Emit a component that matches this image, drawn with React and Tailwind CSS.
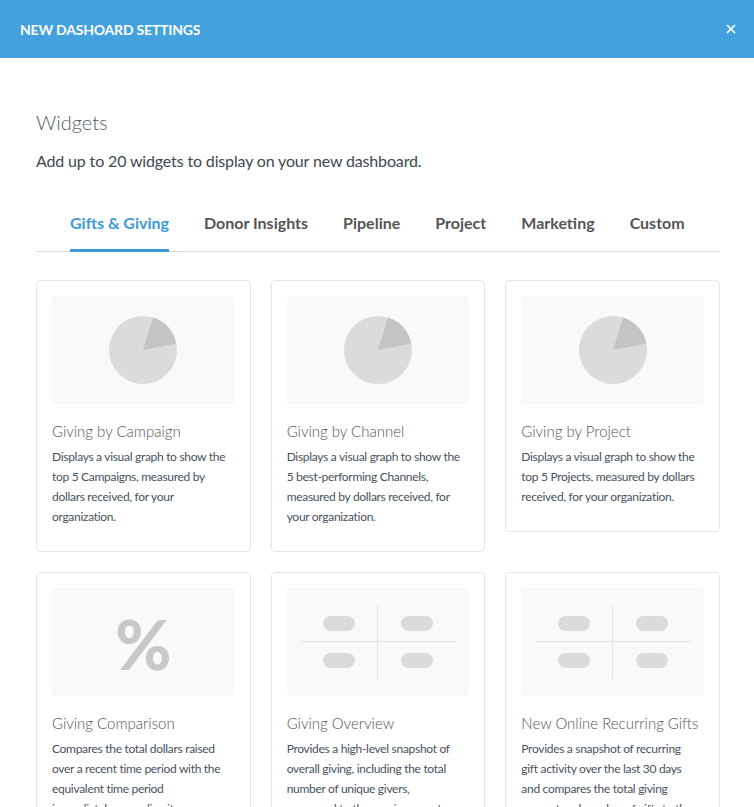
import { X } from "lucide-react";

const tabs = ["Gifts & Giving", "Donor Insights", "Pipeline", "Project", "Marketing", "Custom"];

const widgets = [
  {
    title: "Giving by Campaign",
    kind: "pie",
    lines: [
      "Displays a visual graph to show the",
      "top 5 Campaigns, measured by",
      "dollars received, for your",
      "organization.",
    ],
  },
  {
    title: "Giving by Channel",
    kind: "pie",
    lines: [
      "Displays a visual graph to show the",
      "5 best-performing Channels,",
      "measured by dollars received, for",
      "your organization.",
    ],
  },
  {
    title: "Giving by Project",
    kind: "pie",
    lines: [
      "Displays a visual graph to show the",
      "top 5 Projects, measured by dollars",
      "received, for your organization.",
    ],
  },
  {
    title: "Giving Comparison",
    kind: "percent",
    lines: [
      "Compares the total dollars raised",
      "over a recent time period with the",
      "equivalent time period",
      "immediately preceding it.",
    ],
  },
  {
    title: "Giving Overview",
    kind: "grid",
    lines: [
      "Provides a high-level snapshot of",
      "overall giving, including the total",
      "number of unique givers,",
      "compared to the previous year's",
      "results.",
    ],
  },
  {
    title: "New Online Recurring Gifts",
    kind: "grid",
    lines: [
      "Provides a snapshot of recurring",
      "gift activity over the last 30 days",
      "and compares the total giving",
      "amount and number of gifts to the",
      "previous period.",
    ],
  },
];

const PieArt = () => (
  <svg width="68" height="68" viewBox="0 0 68 68">
    <circle cx="34" cy="34" r="34" fill="#dcdbda" />
    <path d="M34 34 L44 1.5 A34 34 0 0 1 67.3 27.5 Z" fill="#c4c4c4" />
  </svg>
);

const GridArt = () => (
  <div className="relative w-[156px] h-[74px]">
    <div className="absolute left-0 right-0 top-[36px] h-px bg-[#e2e1e0]" />
    <div className="absolute top-0 bottom-0 left-[77px] w-px bg-[#e2e1e0]" />
    <div className="grid grid-cols-2 h-full">
      {[0, 1, 2, 3].map((i) => (
        <div key={i} className="flex items-center justify-center">
          <div className="w-[32px] h-[15px] rounded-full bg-[#dcdbda]" />
        </div>
      ))}
    </div>
  </div>
);

const WidgetArt = ({ kind }) => {
  if (kind === "pie") return <PieArt />;
  if (kind === "percent")
    return <span className="text-[68px] font-black leading-none text-[#c8c8c8] mt-1">%</span>;
  return <GridArt />;
};

const WidgetCard = ({ title, kind, lines }) => (
  <div className="border border-[#e6e6e6] rounded-[4px] bg-white p-[15px] pb-[24px]">
    <div className="h-[108px] rounded-[4px] bg-[#f9f9f9] flex items-center justify-center">
      <WidgetArt kind={kind} />
    </div>
    <h3 className="mt-[16px] text-[15px] font-light text-[#555555] leading-[22px]">{title}</h3>
    <p className="mt-[5px] text-[12px] leading-[20px] tracking-[-0.3px] text-[#48525c]">
      {lines.map((l) => (
        <span key={l} className="block whitespace-nowrap">
          {l}
        </span>
      ))}
    </p>
  </div>
);

export default function App() {
  return (
    <div className="w-[754px] h-[807px] overflow-hidden bg-white font-['Lato',sans-serif]">
      <header className="h-[58px] bg-[#43a2dd] flex items-center justify-between pl-[20px] pr-[16px]">
        <h1 className="text-[14px] font-bold text-white tracking-[-0.2px]">NEW DASHOARD SETTINGS</h1>
        <X className="w-[14px] h-[14px] text-white" strokeWidth={3} />
      </header>

      <main className="pl-[36px] pr-[34px] pt-[50px]">
        <h2 className="text-[20px] font-light text-[#555c63] leading-[28px]">Widgets</h2>
        <p className="mt-[14px] text-[16px] tracking-[-0.15px] text-[#40484f] leading-[22px]">
          Add up to 20 widgets to display on your new dashboard.
        </p>

        <nav className="mt-[40px] flex gap-[35px] pl-[34px] border-b border-[#dcdcdc]">
          {tabs.map((t, i) => (
            <button
              key={t}
              className={`pb-[15px] text-[16px] font-bold leading-[22px] border-b-[3px] -mb-px ${
                i === 0 ? "text-[#3a9ad9] border-[#3a9ad9]" : "text-[#555555] border-transparent"
              }`}
            >
              {t}
            </button>
          ))}
        </nav>

        <div className="mt-[28px] grid grid-cols-3 gap-x-[20px] gap-y-[20px] items-start">
          {widgets.map((w) => (
            <WidgetCard key={w.title} {...w} />
          ))}
        </div>
      </main>
    </div>
  );
}
